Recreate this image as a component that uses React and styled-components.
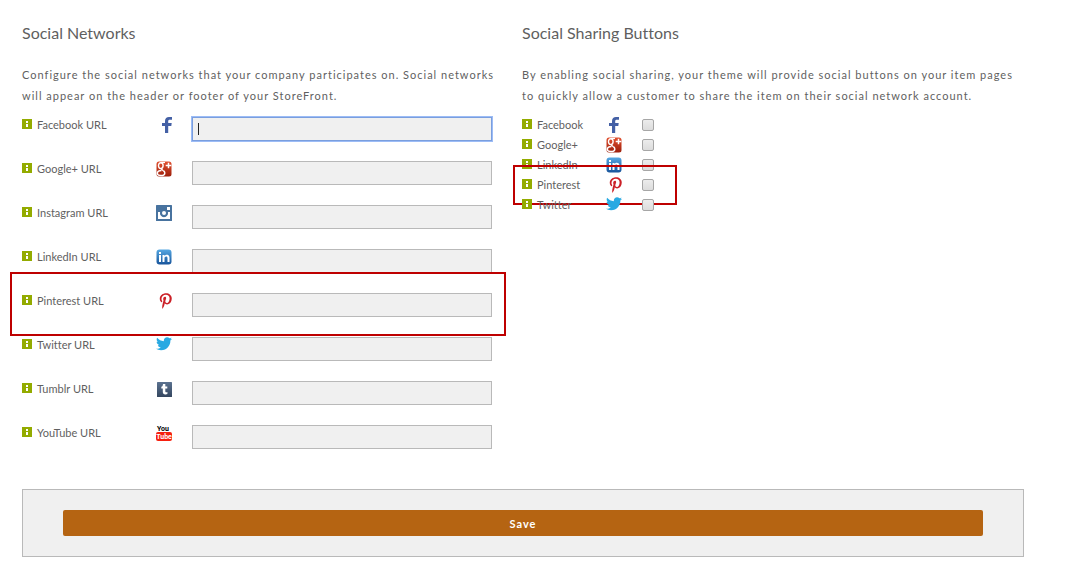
import React, { useState } from "react";
import styled, { createGlobalStyle, css } from "styled-components";
import { FaPinterestP, FaTwitter } from "react-icons/fa";

const networks = [
  { id: "facebook", name: "Facebook" },
  { id: "google", name: "Google+" },
  { id: "instagram", name: "Instagram" },
  { id: "linkedin", name: "LinkedIn" },
  { id: "pinterest", name: "Pinterest" },
  { id: "twitter", name: "Twitter" },
  { id: "tumblr", name: "Tumblr" },
  { id: "youtube", name: "YouTube" },
];

const shareIds = ["facebook", "google", "linkedin", "pinterest", "twitter"];

function InfoIcon() {
  return (
    <Info viewBox="0 0 10 10" aria-hidden="true">
      <path fill="#93ab00" d="M0 0h10v10H0z" />
      <path fill="#fff" d="M4 2h2v2H4zM4 5h2v3H4z" />
    </Info>
  );
}

function NetworkIcon({ id, prefix }) {
  const gradient = `${prefix}-${id}-fill`;

  switch (id) {
    case "facebook":
      return (
        <svg width="10" height="16" viewBox="0 0 10 16">
          <path
            fill="#4460a5"
            d="M3 16V9H0V6h3V4C3 1.300 4.600 0 7 0h3v2.700H8C6.600 2.700 6.200 3.200 6.200 4.200V6H9.700L9.300 9H6.200v7z"
          />
        </svg>
      );
    case "google":
      return (
        <svg width="16" height="16" viewBox="0 0 16 16">
          <defs>
            <linearGradient id={gradient} x1="0" y1="0" x2="0" y2="1">
              <stop offset="0" stopColor="#e2502f" />
              <stop offset="1" stopColor="#9c1f0c" />
            </linearGradient>
          </defs>
          <rect x="0.500" y="0.500" width="15" height="15" rx="2.500" fill={`url(#${gradient})`} />
          <g fill="none" stroke="#fff">
            <ellipse cx="4.800" cy="4.600" rx="2.300" ry="2.900" strokeWidth="1.400" />
            <path strokeWidth="1.200" d="M5 1.500h4" />
            <path strokeWidth="1.400" d="M5.600 7.400c-.600 1 .500 1.400 1.700 2.200" />
            <path
              strokeWidth="1.500"
              d="M5.500 9.400C3.200 9.300 1.300 10.500 1.300 12.200c0 1.600 1.600 2.300 3.600 2.300 2.400 0 3.900-1 3.900-2.600 0-1-.600-1.700-1.500-2.300"
            />
            <path strokeWidth="1.500" d="M9.700 4.500h5.600M12.500 1.700v5.600" />
          </g>
        </svg>
      );
    case "instagram":
      return (
        <svg width="16" height="16" viewBox="0 0 16 16">
          <rect width="16" height="16" rx="0.500" fill="#48739f" />
          <path fill="#fff" d="M11 2h3v3h-3zM2 7h2.200a4 4 0 1 0 7.600 0H14v7H2z" />
          <circle cx="8" cy="8" r="3.300" fill="#48739f" stroke="#48739f" />
          <circle cx="8" cy="8" r="2" fill="#fff" />
        </svg>
      );
    case "linkedin":
      return (
        <svg width="16" height="16" viewBox="0 0 16 16">
          <defs>
            <linearGradient id={gradient} x1="0" y1="0" x2="0" y2="1">
              <stop offset="0" stopColor="#55a7e2" />
              <stop offset="1" stopColor="#17549b" />
            </linearGradient>
          </defs>
          <rect x="0.500" y="0.500" width="15" height="15" rx="3" fill={`url(#${gradient})`} />
          <path
            fill="#fff"
            d="M3 3h2v2H3zM3 6h2v7H3zM6.500 6h2v1c.600-.900 1.400-1.200 2.300-1.200 1.700 0 2.700 1.100 2.700 3V13h-2V9.200c0-1-.400-1.600-1.300-1.600-1 0-1.700.700-1.700 1.800V13h-2z"
          />
        </svg>
      );
    case "pinterest":
      return <FaPinterestP size={16} color="#cb2027" viewBox="-120 0 512 512" />;
    case "twitter":
      return <FaTwitter size={16} color="#28a9e2" viewBox="0 40 512 512" />;
    case "tumblr":
      return (
        <svg width="16" height="16" viewBox="0 0 16 16">
          <defs>
            <linearGradient id={gradient} x1="0" y1="0" x2="0" y2="1">
              <stop offset="0" stopColor="#5b7290" />
              <stop offset="1" stopColor="#34465f" />
            </linearGradient>
          </defs>
          <rect x="1" y="1" width="15" height="15" rx="0.500" fill={`url(#${gradient})`} />
          <path
            fill="#fff"
            d="M7 3h2.300v2.500h2v2h-2V10c0 1 .300 1.300 1 1.300.400 0 .700-.100 1.100-.300V13c-.600.300-1.200.400-2 .400-1.700 0-2.600-.900-2.600-2.600V7.500H5.300V5.800C6.400 5.500 6.900 4.600 7 3z"
          />
        </svg>
      );
    case "youtube":
      return (
        <svg width="16" height="16" viewBox="0 0 16 16">
          <YouTubeText x="7" y="6" fill="#000">You</YouTubeText>
          <rect y="7" width="16" height="9" rx="2" fill="#f6200f" />
          <YouTubeText x="8" y="14" fill="#fff">Tube</YouTubeText>
        </svg>
      );
    default:
      return null;
  }
}

export default function App() {
  const [urls, setUrls] = useState({});
  const [shared, setShared] = useState({});
  const [active, setActive] = useState("facebook");

  const handleSubmit = (e) => {
    e.preventDefault();
  };

  return (
    <>
      <GlobalStyle />
      <Page onSubmit={handleSubmit}>
        <Columns>
          <section>
            <Heading>Social Networks</Heading>
            <Intro>
              Configure the social networks that your company participates on. Social networks
              will appear on the header or footer of your StoreFront.
            </Intro>
            <UrlList>
              {networks.map(({ id, name }) => (
                <UrlRow key={id}>
                  <InfoIcon />
                  <Label htmlFor={`url-${id}`}>{name} URL</Label>
                  <IconCell $align="flex-end">
                    <NetworkIcon id={id} prefix="url" />
                  </IconCell>
                  <Field>
                    <UrlInput
                      id={`url-${id}`}
                      type="text"
                      value={urls[id] || ""}
                      $active={active === id}
                      onFocus={() => setActive(id)}
                      onChange={(e) => setUrls({ ...urls, [id]: e.target.value })}
                    />
                    {active === id && !urls[id] && <Caret />}
                  </Field>
                  {id === "pinterest" && <UrlHighlight />}
                </UrlRow>
              ))}
            </UrlList>
          </section>
          <section>
            <Heading>Social Sharing Buttons</Heading>
            <Intro>
              By enabling social sharing, your theme will provide social buttons on your item pages
              to quickly allow a customer to share the item on their social network account.
            </Intro>
            <ShareList>
              {networks
                .filter(({ id }) => shareIds.includes(id))
                .map(({ id, name }) => (
                  <ShareRow key={id}>
                    <InfoIcon />
                    <Label htmlFor={`share-${id}`}>{name}</Label>
                    <IconCell $align="center">
                      <NetworkIcon id={id} prefix="share" />
                    </IconCell>
                    <Checkbox
                      id={`share-${id}`}
                      type="checkbox"
                      checked={!!shared[id]}
                      onChange={(e) => setShared({ ...shared, [id]: e.target.checked })}
                    />
                    {id === "pinterest" && <ShareHighlight />}
                  </ShareRow>
                ))}
            </ShareList>
          </section>
        </Columns>
        <Footer>
          <SaveButton type="submit">Save</SaveButton>
        </Footer>
      </Page>
    </>
  );
}

const GlobalStyle = createGlobalStyle`
  * {
    box-sizing: border-box;
  }
  body {
    margin: 0;
    background: #fff;
    color: #5f5f5f;
    font-family: Lato, "Liberation Sans", sans-serif;
    font-size: 11px;
    font-variant-ligatures: none;
  }
`;

const Page = styled.form`
  padding: 21px 55px 21px 22px;
`;

const Columns = styled.div`
  display: grid;
  grid-template-columns: 1fr 1fr;
  padding-right: 2px;
`;

const Heading = styled.h2`
  margin: 0 0 19px;
  font-size: 16px;
  font-weight: 400;
  line-height: 24px;
`;

const Intro = styled.p`
  margin: 0 0 11px;
  padding-right: 6px;
  line-height: 21px;
  letter-spacing: 1px;
`;

const UrlList = styled.div`
  display: grid;
  gap: 20px;
`;

const ShareList = styled.div`
  display: grid;
  gap: 4px;
`;

const UrlRow = styled.div`
  position: relative;
  display: grid;
  grid-template-columns: 15px 119px 36px minmax(0, 1fr);
  align-items: start;
  margin-right: 30px;
`;

const ShareRow = styled.div`
  position: relative;
  display: grid;
  grid-template-columns: 15px 69px 36px 12px;
  align-items: start;
  width: 146px;
`;

const Info = styled.svg`
  display: block;
  width: 10px;
  height: 10px;
  margin-top: 2px;
`;

const Label = styled.label`
  line-height: 16px;
`;

const IconCell = styled.span`
  display: flex;
  justify-content: ${({ $align }) => $align};
  width: 16px;
  height: 16px;
  svg {
    display: block;
    flex: none;
  }
`;

const Field = styled.div`
  position: relative;
`;

const UrlInput = styled.input`
  display: block;
  width: 100%;
  height: 24px;
  padding: 0 6px;
  border: 1px solid #b9b9b9;
  border-radius: 0;
  outline: none;
  background: #f0f0f0;
  color: #333;
  font: inherit;
  ${({ $active }) =>
    $active &&
    css`
      border-color: #7a9ede;
      box-shadow: 0 0 0 1px #9cbcf6;
    `}
`;

const Caret = styled.span`
  position: absolute;
  top: 6px;
  left: 6px;
  width: 1px;
  height: 12px;
  background: #222;
  pointer-events: none;
`;

const Checkbox = styled.input`
  appearance: none;
  width: 12px;
  height: 12px;
  margin: 2px 0 0;
  border: 1px solid #a6a6a6;
  border-radius: 2px;
  background: linear-gradient(#ececec, #dcdcdc);
  &:checked {
    background: #7a9ede;
  }
`;

const Highlight = styled.span`
  position: absolute;
  border: 2px solid #be0000;
  pointer-events: none;
`;

const UrlHighlight = styled(Highlight)`
  top: -21px;
  right: -14px;
  bottom: -19px;
  left: -12px;
`;

const ShareHighlight = styled(Highlight)`
  top: -12px;
  right: -9px;
  bottom: -12px;
  left: -9px;
`;

const YouTubeText = styled.text`
  font-family: Roboto, sans-serif;
  font-size: 7px;
  font-weight: 700;
  text-anchor: middle;
`;

const Footer = styled.div`
  margin-top: 40px;
  padding: 20px 40px;
  border: 1px solid #b9b9b9;
  background: #f0f0f0;
`;

const SaveButton = styled.button`
  display: block;
  width: 100%;
  height: 26px;
  padding: 0;
  border: 0;
  border-radius: 2px;
  background: #b56412;
  color: #fff;
  font: inherit;
  font-weight: 700;
  letter-spacing: 1px;
  cursor: pointer;
`;
